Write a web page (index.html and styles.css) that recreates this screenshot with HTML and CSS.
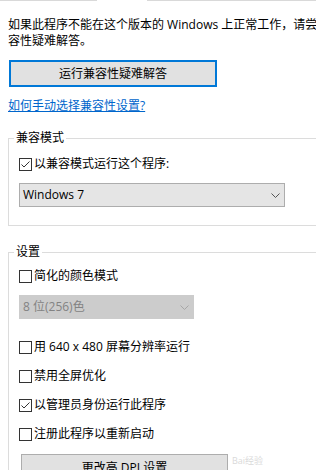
FILE: index.html
```html
<!DOCTYPE html>
<html lang="zh-CN">
<head>
<meta charset="utf-8">
<title>兼容性</title>
<link rel="stylesheet" href="styles.css">
</head>
<body>
<div class="page">
  <div class="topline"><span class="seg seg-left"></span><span class="seg seg-right"></span></div>
  <p class="intro"><span class="line">如果此程序不能在这个版本的 Windows 上正常工作，请尝试运行兼</span><span class="line">容性疑难解答。</span></p>
  <button class="btn btn-primary" type="button">运行兼容性疑难解答</button>
  <a class="link" href="#">如何手动选择兼容性设置?</a>

  <fieldset class="group group-compat">
    <legend class="legend">兼容模式</legend>
    <label class="check">
      <svg class="box" width="13" height="13" viewBox="0 0 13 13"><rect x="0.5" y="0.5" width="12" height="12" fill="#fff" stroke="#333"/><path d="M2.5 6.5 L5 9 L10.5 3.5" fill="none" stroke="#333" stroke-width="1"/></svg>
      <span>以兼容模式运行这个程序:</span>
    </label>
    <div class="select select-wide">
      <span class="select-text">Windows 7</span>
      <svg class="chev" width="9" height="5" viewBox="0 0 9 5"><path d="M0.5 0.5 L4.5 4.5 L8.5 0.5" fill="none" stroke="#555" stroke-width="1"/></svg>
    </div>
  </fieldset>

  <fieldset class="group group-settings">
    <legend class="legend">设置</legend>
    <label class="check">
      <svg class="box" width="13" height="13" viewBox="0 0 13 13"><rect x="0.5" y="0.5" width="12" height="12" fill="#fff" stroke="#333"/></svg>
      <span>简化的颜色模式</span>
    </label>
    <div class="select select-narrow disabled">
      <span class="select-text">8 位(256)色</span>
      <svg class="chev" width="9" height="5" viewBox="0 0 9 5"><path d="M0.5 0.5 L4.5 4.5 L8.5 0.5" fill="none" stroke="#a6a6a6" stroke-width="1"/></svg>
    </div>
    <label class="check check-after-select">
      <svg class="box" width="13" height="13" viewBox="0 0 13 13"><rect x="0.5" y="0.5" width="12" height="12" fill="#fff" stroke="#333"/></svg>
      <span>用 640 x 480 屏幕分辨率运行</span>
    </label>
    <label class="check check-next">
      <svg class="box" width="13" height="13" viewBox="0 0 13 13"><rect x="0.5" y="0.5" width="12" height="12" fill="#fff" stroke="#333"/></svg>
      <span>禁用全屏优化</span>
    </label>
    <label class="check check-next">
      <svg class="box" width="13" height="13" viewBox="0 0 13 13"><rect x="0.5" y="0.5" width="12" height="12" fill="#fff" stroke="#333"/><path d="M2.5 6.5 L5 9 L10.5 3.5" fill="none" stroke="#333" stroke-width="1"/></svg>
      <span>以管理员身份运行此程序</span>
    </label>
    <label class="check check-next">
      <svg class="box" width="13" height="13" viewBox="0 0 13 13"><rect x="0.5" y="0.5" width="12" height="12" fill="#fff" stroke="#333"/></svg>
      <span>注册此程序以重新启动</span>
    </label>
    <div class="btn-row">
      <button class="btn btn-dpi" type="button">更改高 DPI 设置</button>
      <span class="watermark">Bai经验</span>
    </div>
  </fieldset>
</div>
</body>
</html>
```
FILE: styles.css
```css
html, body {
  margin: 0;
  padding: 0;
  background: #fff;
  overflow: hidden;
}
body {
  width: 316px;
  height: 470px;
  font-family: "Open Sans", "Noto Sans CJK SC", sans-serif;
  font-size: 12px;
  line-height: 16px;
  color: #000;
}
.page {
  display: flex;
  flex-direction: column;
  align-items: flex-start;
}
.topline {
  display: flex;
  width: 316px;
  height: 1px;
}
.seg {
  display: block;
  height: 1px;
  background: #d9d9d9;
}
.seg-left { width: 97px; }
.seg-right { flex: 1; margin-left: 50px; }

.intro {
  margin: 16px 0 0 8px;
  white-space: nowrap;
}
.intro .line { display: block; }

.btn {
  font-family: inherit;
  font-size: 12px;
  line-height: 16px;
  color: #000;
  background: #e1e1e1;
  border: 1px solid #adadad;
  padding: 0;
  margin: 0;
  height: 27px;
}
.btn-primary {
  margin: 11px 0 0 9px;
  width: 208px;
  border: 2px solid #0078d7;
}
.link {
  margin: 11px 0 0 8px;
  color: #0066cc;
  text-decoration: underline;
}

.group {
  align-self: stretch;
  margin: 0 -30px 0 8px;
  padding: 0 0 0 10px;
  border: 1px solid #dcdcdc;
  border-right: 0;
  min-width: 0;
  display: flex;
  flex-direction: column;
  align-items: flex-start;
}
.group-compat {
  margin-top: 16px;
  padding-top: 10px;
  padding-bottom: 18px;
}
.group-settings {
  margin-top: 18px;
  padding-top: 8px;
  padding-bottom: 40px;
}
.legend {
  padding: 0 2px;
  margin-left: -5px;
  line-height: 16px;
  color: #000;
}

.check {
  display: flex;
  align-items: center;
  height: 16px;
  white-space: nowrap;
}
.check .box {
  display: block;
  flex: none;
  margin-right: 2px;
}
.check-after-select { margin-top: 20px; }
.check-next { margin-top: 13px; }

.select {
  margin-top: 11px;
  box-sizing: border-box;
  height: 24px;
  display: flex;
  align-items: center;
  justify-content: space-between;
  padding: 0 4px 0 3px;
  background: #e5e5e5;
  border: 1px solid #adadad;
}
.select-wide { width: 266px; }
.select-narrow { width: 175px; }
.select.disabled {
  background: #cccccc;
  border-color: #cccccc;
  color: #838383;
}
.chev { display: block; }

.btn-row {
  margin-top: 12px;
  display: flex;
  align-items: flex-start;
}
.btn-dpi {
  margin-left: 2px;
  width: 207px;
}
.watermark {
  margin-left: 4px;
  margin-top: 1px;
  font-size: 9px;
  line-height: 12px;
  color: #dadada;
}
```
